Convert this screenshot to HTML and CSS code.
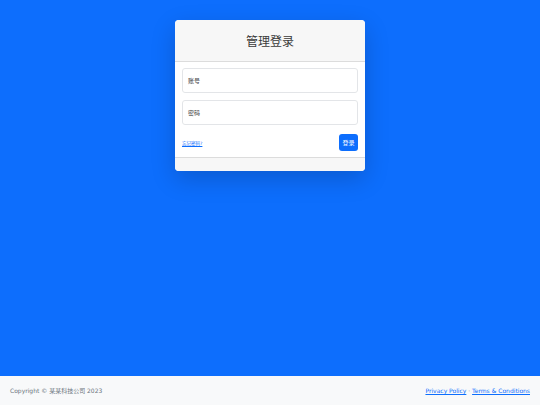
FILE: index.html
```html
<!DOCTYPE html>
<html lang="zh-CN">
<head>
<meta charset="utf-8">
<title>管理登录</title>
<link rel="stylesheet" href="styles.css">
</head>
<body>
<div class="layout">
  <main class="main">
    <div class="card">
      <div class="card-header"><h3 class="title">管理登录</h3></div>
      <div class="card-body">
        <div class="field"><span class="placeholder">账号</span></div>
        <div class="field"><span class="placeholder">密码</span></div>
        <div class="actions">
          <a class="small-link" href="#">忘记密码?</a>
          <a class="btn" href="#">登录</a>
        </div>
      </div>
      <div class="card-footer"></div>
    </div>
  </main>
  <footer class="footer">
    <div class="copy">Copyright © 某某科技公司 2023</div>
    <div class="links"><a href="#">Privacy Policy</a> · <a href="#">Terms &amp; Conditions</a></div>
  </footer>
</div>
</body>
</html>
```

FILE: styles.css
```css
html, body {
  margin: 0;
  padding: 0;
}
body {
  background: #0d6efd;
  font-family: "DejaVu Sans", "Noto Sans CJK SC", sans-serif;
  color: #212529;
}
.layout {
  display: flex;
  flex-direction: column;
  height: 405px;
}
.main {
  flex: 1;
  padding-top: 20px;
}
.card {
  width: 190px;
  margin: 0 auto;
  background: #fff;
  border-radius: 4px;
  overflow: hidden;
  box-shadow: 0 8px 24px rgba(0, 0, 0, 0.18);
}
.card-header {
  height: 41px;
  background: #f7f7f7;
  border-bottom: 1px solid #dcdcdc;
  display: flex;
  align-items: center;
  justify-content: center;
}
.title {
  margin: 0;
  font-size: 12px;
  font-weight: 400;
  color: #3a3a3a;
}
.card-body {
  padding: 6px 7px 6px;
}
.field {
  height: 23px;
  border: 1px solid #e3e5e8;
  border-radius: 3px;
  margin-bottom: 7px;
  display: flex;
  align-items: center;
  padding-left: 5px;
}
.placeholder {
  font-size: 6px;
  color: #444;
}
.actions {
  display: flex;
  align-items: center;
  justify-content: space-between;
  padding-top: 2px;
}
.small-link {
  font-size: 4.5px;
  color: #0d6efd;
}
.btn {
  display: block;
  width: 19px;
  height: 17px;
  line-height: 17px;
  text-align: center;
  background: #0d6efd;
  color: #fff;
  border-radius: 3px;
  font-size: 6px;
  text-decoration: none;
}
.card-footer {
  height: 13px;
  background: #f7f7f7;
  border-top: 1px solid #dcdcdc;
}
.footer {
  height: 29px;
  background: #f8f9fa;
  display: flex;
  align-items: center;
  justify-content: space-between;
  padding: 0 10px;
  font-size: 6px;
}
.copy {
  color: #6c757d;
}
.links {
  color: #6c757d;
}
.links a {
  color: #0d6efd;
}
```
